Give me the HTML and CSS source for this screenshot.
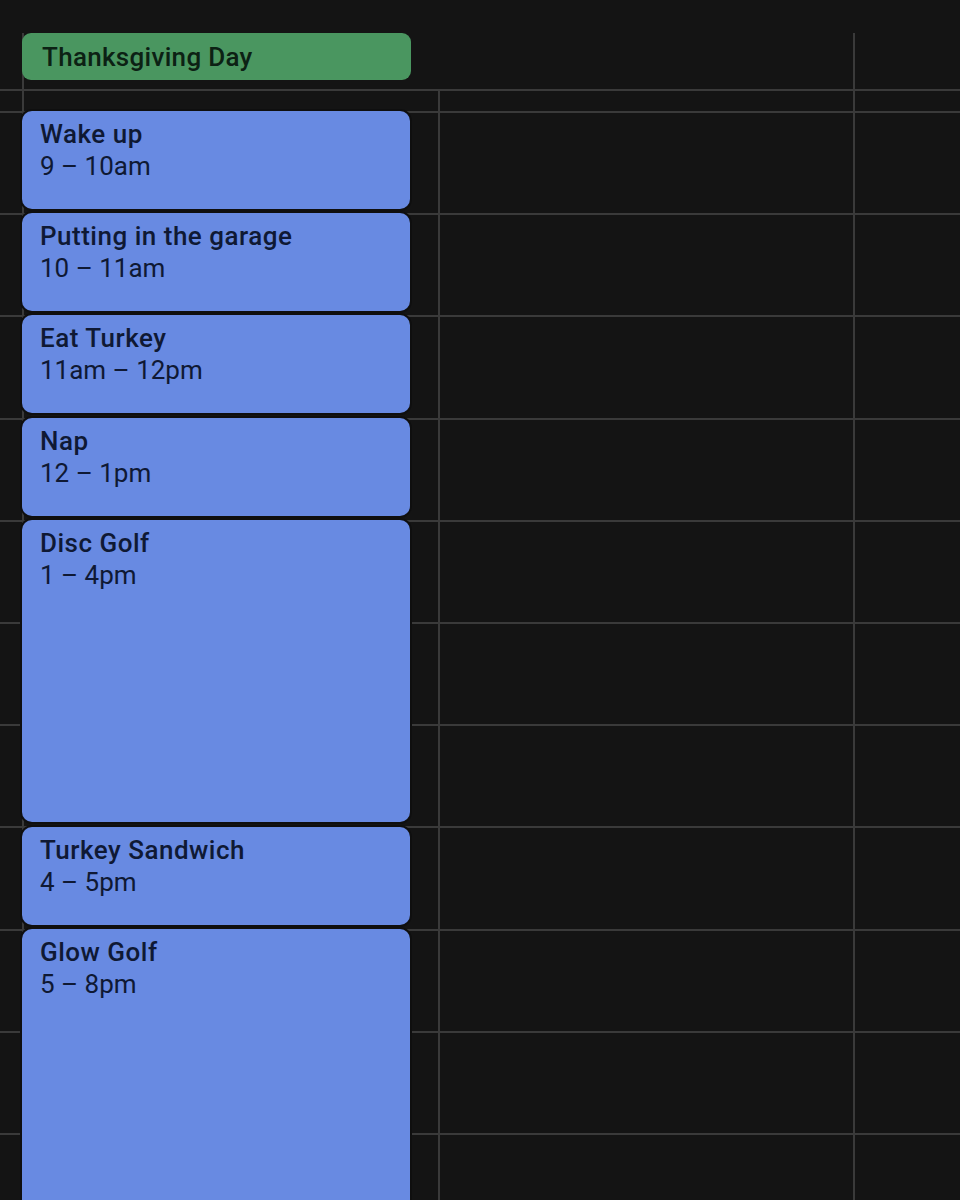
FILE: index.html
```html
<!DOCTYPE html>
<html lang="en">
<head>
<meta charset="utf-8">
<title>Calendar</title>
<link rel="stylesheet" href="styles.css">
</head>
<body>
<div class="cal">
  <div class="allday-row">
    <div class="gutter"></div>
    <div class="allday-cell">
      <div class="allday-event">Thanksgiving Day</div>
    </div>
    <div class="allday-rest"></div>
  </div>
  <div class="grid">
    <div class="gutter"></div>
    <div class="day day-main">
      <div class="event h1"><div class="ev-title">Wake up</div><div class="ev-time">9 – 10am</div></div>
      <div class="event h1"><div class="ev-title">Putting in the garage</div><div class="ev-time">10 – 11am</div></div>
      <div class="event h1"><div class="ev-title">Eat Turkey</div><div class="ev-time">11am – 12pm</div></div>
      <div class="event h1"><div class="ev-title">Nap</div><div class="ev-time">12 – 1pm</div></div>
      <div class="event h3"><div class="ev-title">Disc Golf</div><div class="ev-time">1 – 4pm</div></div>
      <div class="event h1"><div class="ev-title">Turkey Sandwich</div><div class="ev-time">4 – 5pm</div></div>
      <div class="event h3"><div class="ev-title">Glow Golf</div><div class="ev-time">5 – 8pm</div></div>
    </div>
    <div class="day day-second"></div>
    <div class="day day-third"></div>
  </div>
</div>
</body>
</html>
```

FILE: styles.css
```css
* { box-sizing: border-box; }
html, body {
  margin: 0;
  padding: 0;
  background: #141414;
  height: 1200px;
  overflow: hidden;
}
body {
  font-family: Roboto, "Open Sans", Arial, sans-serif;
  color: #0f1934;
}
.cal {
  display: flex;
  flex-direction: column;
  height: 1200px;
}
.allday-row {
  display: flex;
  flex: none;
  height: 89px;
  padding-top: 33px;
}
.gutter {
  width: 22px;
  flex: none;
}
.allday-cell {
  width: 833px;
  flex: none;
  border-left: 2px solid #3a3a3a;
  border-right: 2px solid #3a3a3a;
}
.allday-event {
  margin-left: -2px;
  width: 389px;
  height: 47px;
  background: #4a9660;
  border-radius: 9px;
  display: flex;
  align-items: center;
  padding-left: 20px;
  font-size: 26px;
  font-weight: 500;
  letter-spacing: 0.3px;
  color: #0c2114;
}
.allday-rest { flex: 1; }
.grid {
  flex: 1;
  min-height: 0;
  display: flex;
  overflow: hidden;
  border-top: 2px solid #3a3a3a;
  background-image: repeating-linear-gradient(to bottom, #3a3a3a 0 2px, transparent 2px 102.2px);
  background-position: 0 20px;
}
.day {
  border-left: 2px solid #3a3a3a;
  flex: none;
}
.day-main {
  width: 416px;
  padding: 20px 28px 0 0;
  display: flex;
  flex-direction: column;
  gap: 4.2px;
}
.day-second { width: 415px; }
.day-third { flex: 1; }
.event {
  margin-left: -2px;
  flex: none;
  background: #688ae2;
  border-radius: 10px;
  box-shadow: 0 0 0 2px #0f0f0f;
  padding: 7px 0 0 18px;
  color: #0f1934;
}
.event.h1 { height: 98px; }
.event.h3 { height: 302.6px; }
.ev-title {
  font-size: 26px;
  font-weight: 500;
  letter-spacing: 0.5px;
  line-height: 32px;
}
.ev-time {
  font-size: 26px;
  font-weight: 400;
  line-height: 32px;
}
```
